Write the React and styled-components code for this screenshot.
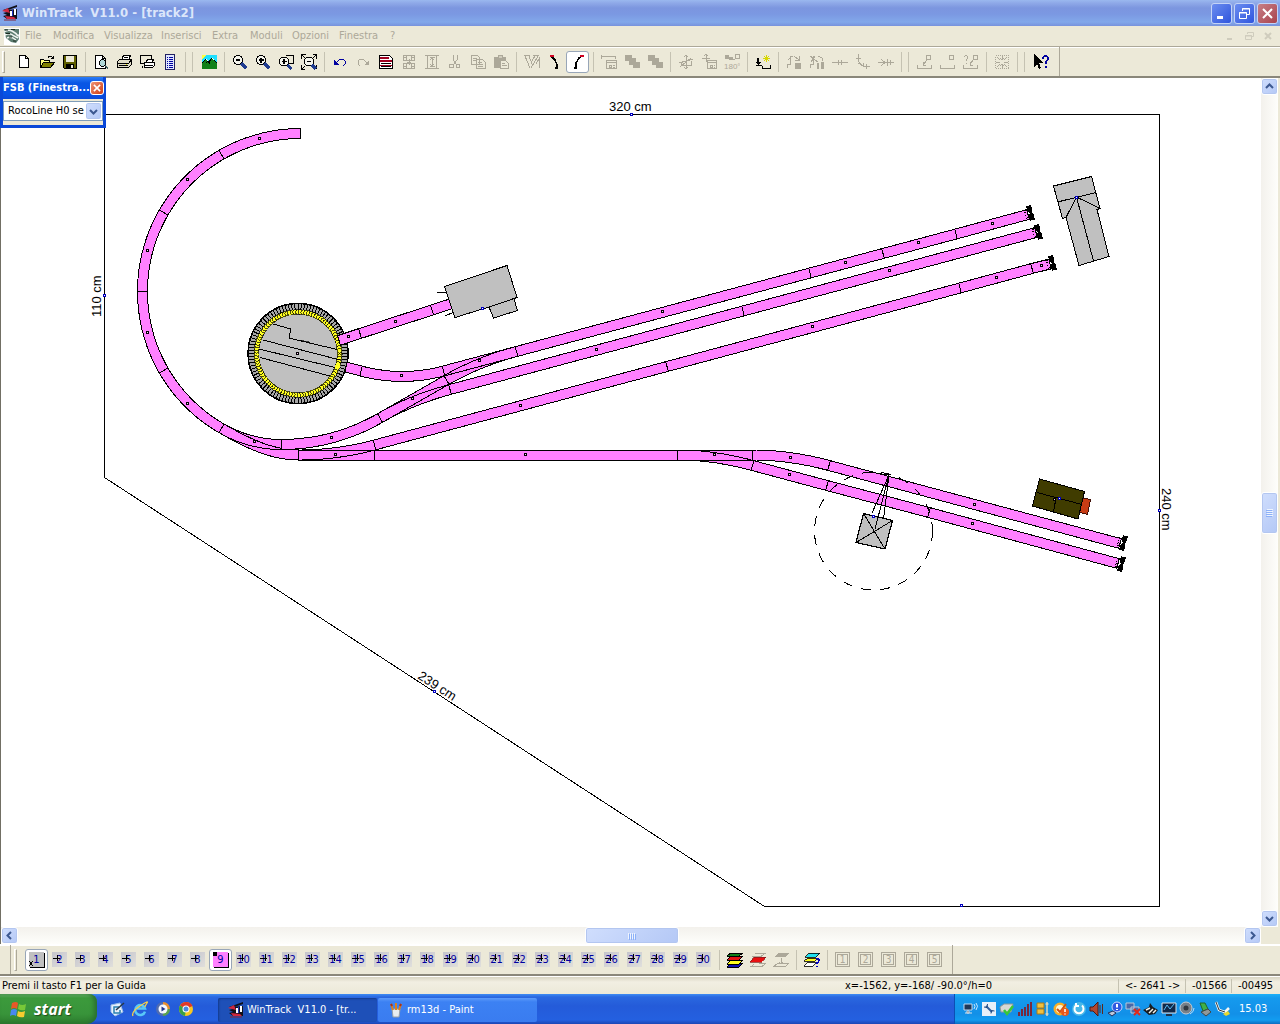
import React from "react";
import styled, { createGlobalStyle, css } from "styled-components";

const UI_FONT = '"DejaVu Sans Condensed", "DejaVu Sans", sans-serif';
const FACE = "#ece9d8";
const GREY = "#aca899";

const GlobalStyle = createGlobalStyle`
  * { box-sizing: border-box; }
  body { margin: 0; background: ${FACE}; font: 11px/14px ${UI_FONT}; color: #000; }
  button { font: inherit; color: inherit; padding: 0; margin: 0; border: 0; background: none; }
  svg { display: block; flex: none; }
`;

/* ---------- window frame ---------- */

const Window = styled.div`
  display: flex;
  flex-direction: column;
  height: 100vh;
  overflow: hidden;
`;

const TitleBar = styled.header`
  display: flex;
  align-items: center;
  gap: 4px;
  height: 26px;
  flex: none;
  padding: 0 2px;
  background: linear-gradient(#9ab8ef 0, #8fa9e8 3px, #7c96df 8px, #7b98e2 14px, #82a8ea 22px, #7892dc 26px);
`;

const Title = styled.h1`
  flex: 1;
  margin: 0;
  font: bold 13px/16px ${UI_FONT};
  color: #dbe6fa;
  white-space: pre;
`;

const CaptionButtons = styled.div`
  display: flex;
  gap: 2px;
`;

const CaptionButton = styled.button`
  display: grid;
  place-items: center;
  width: 21px;
  height: 21px;
  border: 1px solid #c3d3f7;
  border-radius: 3px;
  background: ${(p) => (p.$close ? "linear-gradient(135deg, #c77f86, #a9434d)" : "linear-gradient(135deg, #6b8df0, #2f55dd)")};
`;

const MenuBar = styled.nav`
  display: flex;
  align-items: center;
  height: 20px;
  flex: none;
  padding: 0 4px;
  color: ${GREY};
`;

const MenuList = styled.div`
  display: flex;
  padding-left: 5px;
`;

const MenuItem = styled.button`
  width: ${(p) => p.$width}px;
  text-align: left;
  white-space: nowrap;
`;

const MdiButtons = styled.div`
  display: flex;
  gap: 3px;
  margin-left: auto;
`;

const MdiButton = styled.button`
  display: grid;
  place-items: center;
  width: 16px;
  height: 16px;
`;

const ToolRow = styled.div`
  display: flex;
  height: 32px;
  flex: none;
  border-top: 1px solid ${(p) => (p.$bottom ? "#fff" : GREY)};
  border-bottom: 2px solid #8a877a;
  box-shadow: inset 0 1px #fff;
`;

const ToolGroup = styled.div`
  display: flex;
  align-items: center;
  padding: 0 ${(p) => p.$end}px 0 ${(p) => p.$start}px;
  margin-left: ${(p) => p.$indent || 0}px;
  border-right: 1px solid ${GREY};
  border-left: ${(p) => (p.$indent ? `1px solid ${GREY}` : "0")};
`;

const Grip = styled.span`
  width: 3px;
  height: 22px;
  margin-right: ${(p) => p.$gap}px;
  border: 1px solid;
  border-color: #fff ${GREY} ${GREY} #fff;
`;

const Separator = styled.span`
  width: ${(p) => (p.$double ? 16 : 8)}px;
  height: 20px;
  display: flex;
  justify-content: ${(p) => (p.$double ? "space-between" : "center")};
  padding: 0 ${(p) => (p.$double ? 4 : 0)}px;
  &::before, ${(p) => (p.$double ? "&::after" : "&::before")} {
    content: "";
    width: 1px;
    background: #c5c2b2;
  }
`;

const ToolButton = styled.button`
  display: grid;
  place-items: center;
  width: 23px;
  height: 22px;
  border-radius: 3px;
  ${(p) => p.$pressed && css`
    background: #fff;
    border: 1px solid #98a6b8;
  `}
`;

/* ---------- workspace ---------- */

const Workspace = styled.main`
  position: relative;
  flex: 1;
  min-height: 0;
  display: grid;
  grid-template: minmax(0, 1fr) 17px / minmax(0, 1fr) 17px;
  padding-right: 2px;
  border-left: 1px solid #716f64;
`;

const Plan = styled.div`
  background: #fff;
  overflow: hidden;
`;

const ScrollTrack = styled.div`
  display: flex;
  flex-direction: ${(p) => (p.$vertical ? "column" : "row")};
  background: linear-gradient(${(p) => (p.$vertical ? "to right" : "to bottom")}, #f3f1ec, #fefefb);
`;

const ScrollGap = styled.span`
  flex: ${(p) => p.$grow};
`;

const scrollFace = css`
  display: grid;
  place-items: center;
  border: 1px solid #fff;
  border-radius: 3px;
  background: linear-gradient(135deg, #d0defd, #b4c8f6);
  box-shadow: inset 0 0 0 1px #b3c6f0;
`;

const ScrollArrow = styled.button`
  ${scrollFace}
  width: 17px;
  height: 17px;
`;

const ScrollThumb = styled.button`
  ${scrollFace}
  width: ${(p) => (p.$vertical ? 17 : 94)}px;
  height: ${(p) => (p.$vertical ? 42 : 17)}px;
`;

/* floating track library window, lies over the plan */
const Palette = styled.section`
  position: absolute;
  left: -1px;
  top: -1px;
  width: 106px;
  border: 3px solid #0a48d8;
  border-top: 0;
  background: ${FACE};
`;

const PaletteHead = styled.div`
  display: flex;
  align-items: center;
  justify-content: space-between;
  height: 22px;
  padding-right: 2px;
  background: linear-gradient(#2a7cf8, #0a56e4 6px, #0654e8 16px, #0a48d8);
`;

const PaletteTitle = styled.h2`
  margin: 0;
  font: bold 11px/14px ${UI_FONT};
  color: #fff;
  white-space: nowrap;
`;

const PaletteClose = styled.button`
  display: grid;
  place-items: center;
  flex: none;
  width: 14px;
  height: 14px;
  border: 1px solid #fff;
  border-radius: 3px;
  background: linear-gradient(135deg, #ee9376, #cf3d12);
`;

const PaletteField = styled.div`
  position: relative;
  height: 26px;
  padding: 2px 0 4px;
`;

const LibrarySelect = styled.select`
  display: block;
  appearance: none;
  width: 100%;
  height: 20px;
  padding: 0 18px 0 4px;
  border: 1px solid #7f9db9;
  border-radius: 0;
  background: #fff;
  color: #000;
  font: 11px/14px ${UI_FONT};
  white-space: nowrap;
  overflow: hidden;
  text-overflow: clip;
`;

const SelectArrow = styled.span`
  ${scrollFace}
  position: absolute;
  right: 1px;
  top: 3px;
  width: 17px;
  height: 18px;
  pointer-events: none;
`;

/* ---------- layer bar, status bar ---------- */

const LayerButton = styled(ToolButton)`
  color: #0000a0;
`;

const LayerFace = styled.span`
  position: relative;
  display: grid;
  place-items: center;
  width: 15px;
  height: 15px;
  background: ${(p) => p.$fill};
  box-shadow: ${(p) => (p.$raised ? "1px 1px #000" : "none")};
`;

const LayerMark = styled.svg`
  position: absolute;
  left: 0;
  top: 0;
`;

const LayerNumber = styled.span`
  font: 11px/15px ${UI_FONT};
`;

const StatusBar = styled.footer`
  display: flex;
  align-items: center;
  height: 18px;
  flex: none;
  padding: 1px 2px 0;
  border-top: 1px solid #fff;
  background: linear-gradient(#d8d4c2, #f2efe2 5px, #ece9d8);
  white-space: nowrap;
`;

const StatusMain = styled.span`
  flex: 1;
`;

const StatusCoords = styled.span`
  width: 273px;
`;

const StatusCell = styled.span`
  width: ${(p) => p.$width}px;
  padding-left: 6px;
  border-left: 1px solid #c5c2b2;
`;

/* ---------- taskbar ---------- */

const Taskbar = styled.footer`
  display: flex;
  height: 30px;
  flex: none;
  background: linear-gradient(#3f8cf3 0, #2a68e0 3px, #245bd9 12px, #2460e0 26px, #1c46b4 30px);
  color: #fff;
`;

const StartButton = styled.button`
  display: flex;
  align-items: center;
  gap: 6px;
  width: 97px;
  padding-left: 10px;
  border-radius: 0 8px 10px 0;
  background: linear-gradient(#6cb86c 0, #3c9a3c 4px, #38943a 20px, #2c7a2e 30px);
  box-shadow: inset -3px 0 4px #2a7030;
`;

const StartLabel = styled.span`
  font: italic bold 16px/20px "Open Sans", sans-serif;
  color: #fff;
  text-shadow: 1px 1px 1px #1c4c1c;
`;

const QuickLaunch = styled.div`
  display: flex;
  align-items: center;
  gap: 7px;
  width: 121px;
  padding-left: 12px;
`;

const QuickButton = styled.button`
  display: grid;
  place-items: center;
`;

const TaskButton = styled.button`
  display: flex;
  align-items: center;
  gap: 3px;
  width: 159px;
  height: 24px;
  margin: 4px 1px 0 0;
  padding-left: 10px;
  border-radius: 2px;
  color: #fff;
  white-space: pre;
  background: ${(p) => (p.$active ? "#1e50b8" : "linear-gradient(#5c9bfa, #3c81f3 4px, #3a7cf0)")};
  box-shadow: ${(p) => (p.$active ? "inset 1px 1px 2px #143a8c" : "none")};
`;

const Tray = styled.div`
  display: flex;
  align-items: center;
  gap: 2px;
  margin-left: auto;
  width: 326px;
  padding-left: 8px;
  border-left: 1px solid #0c4fb4;
  background: linear-gradient(#1cb0f8 0, #159aee 4px, #1290e8 20px, #129cf0 26px, #0d6cc0 30px);
`;

const Clock = styled.time`
  margin-left: 6px;
`;

/* ---------- icons, 16x16 ---------- */

const D = { fill: "none", stroke: GREY };
const K = { fill: "none", stroke: "#000" };

const ICONS = {
  new: <path d="M3.500 1.500h6l3 3v9h-9zM9.500 1.500v3h3" fill="#fff" stroke="#000" />,
  open: <g stroke="#000"><path d="M1.500 13.500v-8h3l1 1h5v3" fill="#ffff80" /><path d="M1.500 13.500l3-5h11l-4 5z" fill="#808000" /><path d="M9 3.500q3-3 5 1M14.500 1.500v3h-3" fill="none" /></g>,
  save: <g><path d="M1.500 1.500h13v13h-12l-1-1z" fill="#606000" stroke="#000" /><path d="M4 2h8v6H4z" fill="#ece9d8" /><path d="M4 10h8v4H4z" fill="#000" /><path d="M9 11h2v3H9z" fill="#ece9d8" /></g>,
  preview: <g stroke="#000"><path d="M2.500 1.500h7l3 3v10h-10zM9.500 1.500v3h3" fill="#fff" /><circle cx="9.500" cy="9" r="3.200" fill="#b0d8d8" /><path d="M12 11.500l3 3" strokeWidth="2" stroke="#406060" /></g>,
  print: <g stroke="#000"><path d="M5.500 6l2-4.500h7L12.500 6" fill="#fff" /><path d="M1.500 7.500l2-2h12v5l-3 3h-11z" fill="#e0dcc8" /><path d="M2 9.500h10.500l2.500-3M3 11.500h9M8 3.500h4" fill="none" /><path d="M10 10.500h1" stroke="#e0e000" /></g>,
  printview: <g stroke="#000"><path d="M1.500 1.500h11v8h-11z" fill="#ece9d8" /><path d="M7.500 8l1-3h6l-1 3" fill="#fff" /><path d="M5.500 8.500h10v3l-2 2h-8zM6 11.500h8" fill="#fff" /><path d="M3 11.500v2h1" fill="none" /></g>,
  list: <g><path d="M3.500.5h9v15h-9z" fill="#dfe6ff" stroke="#202060" /><path d="M5 3.500h1M7 3.500h4M5 5.500h1M7 5.500h4M5 7.500h1M7 7.500h4M5 9.500h1M7 9.500h4M5 11.500h1M7 11.500h4M5 13.500h1M7 13.500h4" stroke="#0000a0" fill="none" /></g>,
  photo: <g><path d="M1 1h15v8H1z" fill="#20e0ff" /><path d="M1 1h4L3 4 1 5z" fill="#ffff40" /><path d="M1 9l4-4 3 3 3-4 5 5v6H1z" fill="#108018" /><path d="M1 9l4-4 3 3 3-4 5 5M5 9l2-2 2 3" {...K} /><path d="M4 6l1-1 2 2zM10 5l1-1 2 2z" fill="#fff" /></g>,
  zoomOut: <g><circle cx="6" cy="6" r="4.500" fill="#f4f4ec" stroke="#000" /><path d="M4 6h4" stroke="#000" strokeWidth="2" /><path d="M9.500 9.500l5 5" stroke="#203c90" strokeWidth="3" /></g>,
  zoomIn: <g><circle cx="6" cy="6" r="4.500" fill="#f4f4ec" stroke="#000" /><path d="M3.500 6h5M6 3.500v5" stroke="#000" strokeWidth="1.500" /><path d="M9.500 9.500l5 5" stroke="#203c90" strokeWidth="3" /></g>,
  zoomBox: <g><path d="M7.500 1.500h8v8h-8" {...K} /><circle cx="6" cy="7.500" r="4.500" fill="#f4f4ec" stroke="#000" /><path d="M3.500 7.500h5M6 5v5" stroke="#000" strokeWidth="1.500" /><path d="M9.500 11l4 4" stroke="#203c90" strokeWidth="3" /></g>,
  zoomAll: <g><path d="M.5 4.500v-4h4M11.500.5h4v4M15.500 11v4M4 15.500H.5V11M1 1l3 3M15 1l-3 3M1 15l3-3" {...K} /><circle cx="8" cy="7.500" r="4.500" fill="#f4f4ec" stroke="#000" /><path d="M6 7.500h4" stroke="#000" strokeWidth="1.500" /><path d="M11 11l4 4" stroke="#203c90" strokeWidth="3" /></g>,
  undo: <g><path d="M2 6v5h5z" fill="#0000a0" /><path d="M4 9l4-4h3l2 2v3l-2 2" fill="none" stroke="#0000a0" /></g>,
  redo: <g><path d="M14 6v5H9z" fill={GREY} /><path d="M12 9L8 5H5L3 7v3l2 2" {...D} /></g>,
  report: <g><path d="M1.500 1.500h10l3 3v10h-13z" fill="#fff" stroke="#000" /><path d="M2 4h9M2 7h12" stroke="#a00020" strokeWidth="2" /><path d="M3 9.500h10M3 12.500h10" stroke="#000" /><path d="M2 11h12" stroke="#a00020" /></g>,
  film: <path d="M2.500 1.500h11v5h-11zM2.500 9.500h11v5h-11zM5.500 1v6M10.500 1v6M5.500 9v6M10.500 9v6M3 3.500h2M11 3.500h2M3 12.500h2M11 12.500h2M8.500 5v6M6 8.500h4" {...D} />,
  column: <path d="M1 1.500h14M1 14.500h14M3.500 2v12M12.500 2v12M5.500 3.500h5M5.500 12.500h5M8.500 4v8M6 6l2-2 2 2M6 10l2 2 2-2" {...D} />,
  cut: <g {...D}><path d="M6 1v5l4 5M10 1v5l-4 5" /><circle cx="4.500" cy="12" r="2" /><circle cx="11" cy="12" r="2" /></g>,
  copy: <path d="M1.500 1.500h6l2 2v7h-8zM6.500 5.500h6l2.500 2.500v6.500H6.500zM3 4.500h4M3 6.500h3M8 8.500h4M8 10.500h5M8 12.500h5" {...D} />,
  paste: <g><path d="M1 3h12v11H1z" fill={GREY} /><path d="M5 1h4v3H5z" fill="#d0ccbc" stroke={GREY} /><path d="M7.500 6.500h5l3 3v5h-8z" fill={FACE} stroke={GREY} /><path d="M9 9.500h3M9 11.500h5" {...D} /></g>,
  fork: <path d="M1 2l5 12M5 2l3 8M14 2L7 14M11 2L8 7M0 1.500h6M9 1.500h6M12 10l3-5v9" {...D} />,
  curveRight: <g><path d="M5 3l3 3 2 5v3H8" fill="none" stroke="#000" strokeWidth="1.500" /><path d="M3 1h4v2H3z" fill="#d00020" /></g>,
  curveLeft: <g><path d="M4 14h2V9l3-5 2-1" fill="none" stroke="#000" strokeWidth="1.500" /><path d="M10 1h4v2h-4z" fill="#d00020" /></g>,
  props: <path d="M.5 1v4M.5 2.500h14v2M5.500 6.500h10v8h-10zM5.500 8.500h10M8 11h2v2H8zM12 11.500h2M12 13.500h2" {...D} />,
  stack: <path d="M1 1h7v3h4v4h4v6H9v-3H5V7H1z" fill={GREY} />,
  rotate: <path d="M1 9l14-4M8.500 1v14M2 13L13 4M3 8v3h10v-4M6 3l2-2 2 2M6 13l2 2 2-2" {...D} />,
  moveProps: <path d="M5.500 0v8M1 4.500h8M3 2l2-2 2 2M6.500 6.500h9v8h-9zM6.500 8.500h9M9 11h2v2H9zM13 11.500h1M13 13.500h1" {...D} />,
  turn: <g><path d="M1 1h4v4H1zM5 3h4v3H5z" fill={GREY} /><path d="M11.500.5h4v4h-4zM11 5.500H9" {...D} /><text x="0" y="15" fontSize="8" fontFamily="Liberation Sans" fill={GREY}>180°</text></g>,
  addTrack: <g><path d="M11 1v7M8 4.500h7M9 2l5 5M14 2L9 7" stroke="#d8d800" fill="none" /><path d="M1 11.500h6M7.500 12v2h8v-3" {...K} /><path d="M2 4h2v4h2l-3 3-3-3h2z" fill="#000" /></g>,
  levelA: <g><path d="M1 14v-4h3V2h3M2 6l4-4M8 2l5 4M13 2v4h-4" {...D} /><path d="M9 9h6v6H9z" fill={GREY} /></g>,
  levelB: <g><path d="M1 14v-4h3V2M1 2l8 6M6 2L2 8M9 2l4 2v3" {...D} /><path d="M12 8h3v7h-3zM8 9h2v6H8z" fill={GREY} /></g>,
  straight: <path d="M0 8.500h16M6.500 6v5M9.500 6v5" {...D} />,
  bend: <path d="M3 0v5q1 8 12 8M1 4.500h5M8 9v4M11.500 10v5M5 8l-2 2" {...D} />,
  joinRight: <path d="M0 8.500h16M3 5l4 3.500-4 3.500M9.500 5v7M12.500 6v5" {...D} />,
  rampDown: <path d="M.5 11v3.500h14V11M9.500 1.500h4v4h-4zM10 6l-4 5M6 8v3h3" {...D} />,
  rampFlat: <path d="M.5 11v3.500h14V11M9.500 1.500h4v4h-4z" {...D} />,
  rampAsk: <path d="M.5 11v3.500h14V11M10.500 1.500h4v4h-4zM10 6l-3 5M1 3q2-3 4 0 0 1-2 3v1M3 9v1M7 8v3h3" {...D} />,
  compress: <g><path d="M1.500 1.500h13v13h-13z" fill="none" stroke={GREY} strokeDasharray="1 1" /><path d="M8.500 2v4M8.500 14v-4M2 8.500h4M14 8.500h-4M3 3l3 3M13 3l-3 3M3 13l3-3M13 13l-3-3M6 4l2 2 2-2M6 12l2-2 2 2" {...D} /></g>,
  help: <g><path d="M1 0v13l3-3 2 5 2-1-2-5h4z" fill="#000" /><path d="M10 5q0-3 2.500-3T15 4.500q0 1.500-2.500 3.500v2" fill="none" stroke="#0000a0" strokeWidth="2" /><path d="M11.500 12h2v2h-2z" fill="#0000a0" /></g>,
  layers: <g><path d="M4 11h12l-4 4H0z" fill="#1010b0" stroke="#000" /><path d="M4 8h12l-4 4H0z" fill="#ffff20" stroke="#000" /><path d="M4 4h12l-4 4H0z" fill="#e01010" stroke="#000" /><path d="M4 1h12l-4 3H0z" fill="#108018" stroke="#000" /></g>,
  layerOne: <g><path d="M5 1.500h10l-4 3H2M4 12.500l-3 2h11l4-3H9" {...D} /><path d="M4 5h12l-4 5H0z" fill="#e81010" stroke="#802020" strokeWidth=".7" /></g>,
  layerMove: <g><path d="M5 1h11l-4 4H1z" fill={GREY} /><path d="M4.500 11.500h11l-3 3h-12zM8.500 6v6M6 10l2 2 2-2" {...D} /></g>,
  layerAsk: <g stroke="#000" strokeWidth=".8"><path d="M5 1h11l-4 4H1z" fill="#20e0f0" /><path d="M4 6h11l-4 3H0z" fill="#ffff20" /><path d="M4 10h9l-4 4H0z" fill="#fff" /><path d="M12 7q3-1 3 1t-2 3v1M13 14v1" fill="none" stroke="#0000c0" strokeWidth="1.500" /></g>,
};

const Icon = ({ name }) => (
  <svg width="16" height="16" viewBox="0 0 16 16" shapeRendering="crispEdges" aria-hidden="true">{ICONS[name]}</svg>
);

const AppLogo = () => (
  <svg width="16" height="16" viewBox="0 0 16 16" aria-hidden="true">
    <path d="M1 5L15 0v2L6 5l9-1v10H5l-4-3 4-1-4-2 4-1z" fill="#101018" />
    <path d="M0 6l6-3 2 5-4-1zM3 11l9 1 2 2H5z" fill="#d02840" />
    <path d="M8 6h2v5H8zM12 4h2v6h-2z" fill="#fff" /><path d="M10 5h1v6h-1z" fill="#2030c0" />
    <path d="M2 15h12" stroke="#802838" />
  </svg>
);

const DocLogo = () => (
  <svg width="16" height="17" viewBox="0 0 16 17" aria-hidden="true">
    <path d="M0 0h16v17H0z" fill="#fff" />
    <path d="M0 1h15v5l-1 1 1 4-3 4-5-1-5-4z" fill="#5c7c70" />
    <path d="M0 4q4-3 8-1t6 5M1 7q5-3 9 1l4 2M3 10q4-2 9 2" fill="none" stroke="#f0f4f0" strokeWidth="1.500" />
    <path d="M1 2h3M7 1.500h4M2 5.500h4M5 9h3M9 13h3" stroke="#182820" />
  </svg>
);

/* ---------- track plan geometry ---------- */

const PINK = "#ff80ff";
const HALF = 5;
const rad = (d) => (d * Math.PI) / 180;

/* outline of one track piece: start x, y, heading; end x, y, heading */
function outline([x0, y0, a0, x1, y1, a1]) {
  const chord = Math.hypot(x1 - x0, y1 - y0);
  const k = chord / (3 * Math.cos(rad((a1 - a0) / 4)) ** 2);
  const bx = x0 + k * Math.cos(rad(a0)), by = y0 + k * Math.sin(rad(a0));
  const cx = x1 - k * Math.cos(rad(a1)), cy = y1 - k * Math.sin(rad(a1));
  const n = a0 === a1 && Math.abs(Math.atan2(y1 - y0, x1 - x0) - rad(a0)) < 0.02 ? 1 : 20;
  const left = [], right = [];
  for (let i = 0; i <= n; i++) {
    const t = i / n, u = 1 - t;
    const x = u ** 3 * x0 + 3 * u * u * t * bx + 3 * u * t * t * cx + t ** 3 * x1;
    const y = u ** 3 * y0 + 3 * u * u * t * by + 3 * u * t * t * cy + t ** 3 * y1;
    const h = rad(a0 + (a1 - a0) * t);
    left.push(`${(x + HALF * Math.sin(h)).toFixed(1)} ${(y - HALF * Math.cos(h)).toFixed(1)}`);
    right.unshift(`${(x - HALF * Math.sin(h)).toFixed(1)} ${(y + HALF * Math.cos(h)).toFixed(1)}`);
  }
  return `M${left.concat(right).join("L")}Z`;
}

const Piece = ({ parts }) => (
  <g>
    {parts.map((p, i) => <path key={i} d={outline(p)} fill={PINK} />)}
    {parts.map((p, i) => <path key={i} d={outline(p)} fill="none" stroke="#000" />)}
  </g>
);

const loop = [0, 1, 2, 3, 4].map((i) => {
  const at = (j) => [300.5 - 158 * Math.sin(rad(30 * j)), 291.5 - 158 * Math.cos(rad(30 * j))];
  return [...at(i), 180 - 30 * i, ...at(i + 1), 150 - 30 * i];
});

/* each entry is one track item; a turnout has two legs */
const PIECES = [
  ...loop.map((p) => [p]),
  [[360, 333.5, -18, 432, 310, -18]],
  [[432, 310, -18, 452, 303.5, -18]],
  [[346, 367, 15, 361, 371, 15]],
  [[361, 371, 15, 443.5, 371, -15]],
  [[221.5, 428.3, 30, 281, 444.5, 0], [221.5, 428.3, 30, 298.5, 455, 0]],
  [[281, 444.5, 0, 380, 418, -30]],
  [[380, 418, -30, 446.5, 380, -30], [380, 418, -30, 450, 389.5, -15]],
  [[443.5, 371, -15, 516.5, 351.5, -15], [446.5, 380, -30, 516.5, 351.5, -15]],
  [[298.5, 455, 0, 374.5, 455, 0], [298.5, 455, 0, 374.5, 445, -15]],
  [[374.5, 455, 0, 677.5, 455, 0]],
  [[677.5, 455, 0, 752.5, 455, 0], [677.5, 455, 0, 752.5, 465.5, 15]],
  [[752.5, 455, 0, 829, 465.5, 15]],
  [[829, 465.5, 15, 1120, 543.5, 15]],
  [[752.5, 465.5, 15, 827, 485.5, 15]],
  [[827, 485.5, 15, 929, 512.5, 15]],
  [[929, 512.5, 15, 1118, 563.5, 15]],
  [[374.5, 445, -15, 667, 366.5, -15]],
  [[667, 366.5, -15, 960, 288, -15]],
  [[960, 288, -15, 1032, 268.5, -15]],
  [[1032, 268.5, -15, 1050, 264, -15]],
  [[450, 389.5, -15, 743, 311, -15]],
  [[743, 311, -15, 1036, 232.5, -15]],
  [[516.5, 351.5, -15, 810, 273, -15]],
  [[810, 273, -15, 883, 253.5, -15]],
  [[883, 253.5, -15, 956, 234, -15]],
  [[956, 234, -15, 1028, 214.5, -15]],
];

const NODES = [
  [259, 138], [187, 179], [147, 250], [147, 332], [187, 403], [254, 441], [331, 437], [335, 454],
  [348, 336], [395, 321], [401, 375], [412, 398], [479, 360], [525, 454], [520, 405], [596, 349],
  [662, 311], [714, 454], [812, 326], [845, 262], [918, 242], [992, 223], [889, 270], [996, 277],
  [1041, 265], [790, 457], [789, 474], [974, 504], [972, 523], [297, 353], [1054, 499],
];

const BLUE_NODES = [
  [631, 114], [1159, 510], [961, 905], [434, 691], [104, 295], [482, 308], [1076, 197], [873, 516], [1059, 498],
];

const BUFFERS = [[1030, 213, -15], [1038, 232, -15], [1052, 263, -15], [1123, 543, 15], [1121, 564, 15]];

const ringTeeth = Array.from({ length: 96 }, (_, i) => rad(i * 3.75));

const TrackPlan = () => (
  <svg width="1261" height="849" viewBox="1 78 1261 849" role="img" aria-label="track2" fontFamily="Liberation Sans, sans-serif" fontSize="13">
    <g shapeRendering="crispEdges">
      <path d="M104.500 114.500H1159.500V906.500H764.500L104.500 477.500Z" fill="none" stroke="#000" />

      {/* turntable */}
      <circle cx="298" cy="353.500" r="50" fill="#a8a8a8" stroke="#000" strokeWidth="1.500" />
      {ringTeeth.map((a, i) => (
        <path key={i} stroke="#000" d={`M${298 + 44 * Math.cos(a)} ${353.5 + 44 * Math.sin(a)}L${298 + 50 * Math.cos(a)} ${353.5 + 50 * Math.sin(a)}`} />
      ))}
      {ringTeeth.map((a, i) => (
        <circle key={i} cx={298 + 41.5 * Math.cos(a)} cy={353.5 + 41.5 * Math.sin(a)} r="2.500" fill="#ffff20" stroke="#000" strokeWidth=".7" />
      ))}
      <circle cx="298" cy="353.500" r="39" fill="#c0c0c0" />
      <path d="M263 340L340 360M259 349L337 368M260 357.500L330 376M273 324L291 329L289 338L337 349.500" fill="none" stroke="#000" />
      <path d="M300 341l3-1 2 2 3-1 2 3" fill="none" stroke="#000" strokeWidth=".7" />

      {PIECES.map((parts, i) => <Piece key={i} parts={parts} />)}
      <Piece parts={[[339, 340.5, -18, 360, 333.5, -18]]} />
      <circle cx="337.500" cy="366.500" r="2.500" fill="#ffff20" />

      {/* engine shed */}
      <path d="M437 292.500h9M445 316l9-4" stroke="#000" />
      <path d="M444.500 286.500L507 265.500L517 297.500L514 299L517.500 310.500L493.500 318L489 307L455 317.500Z" fill="#c0c0c0" stroke="#000" />
      <path d="M489 307L517 297.500" stroke="#000" />

      {/* station building */}
      <path d="M1053.500 186L1091.500 176.500L1100 208.500L1097 209.500L1109 256.500L1079 265.500L1066 217.500L1062.500 218.500Z" fill="#c0c0c0" stroke="#000" />
      <path d="M1057.500 202L1096 192.500M1093.500 261L1076.500 197L1066 217.500M1076.500 197L1100 208.500" fill="none" stroke="#000" />

      {/* crane */}
      <circle cx="873.500" cy="531" r="59" fill="none" stroke="#000" strokeDasharray="10 9" />
      <path d="M863.500 513.500L892.500 520.500L885 549L856 542.500Z" fill="#c0c0c0" stroke="#000" strokeWidth="1.200" />
      <path d="M863.500 513.500L885 549M892.500 520.500L856 542.500M889 475L872 513M889 475L875 529M889 475L883.500 519M879 473.500L889 475" fill="none" stroke="#000" />

      {/* goods shed */}
      <path d="M1081 497.500L1090.500 499.500L1087.500 514.500L1079 512Z" fill="#c83c14" stroke="#401008" />
      <path d="M1039.500 479L1084.500 491.500L1078 519L1032.500 506Z" fill="#403c00" stroke="#000" />
      <path d="M1037 492.500L1082 504.500M1056 498L1053.500 512" fill="none" stroke="#000" />

      {BUFFERS.map(([x, y, a]) => (
        <g key={`${x},${y}`} transform={`translate(${x} ${y}) rotate(${a})`}>
          <path d="M-2-7.500h5v6l-1 1.500 1 1.500v6h-5v-6l2-1.500-2-1.500z" fill="#000" />
          <path d="M-5-4h4M-5 4h4M-6-2l2 1M-6 2l2-1" stroke="#000" />
        </g>
      ))}

      {NODES.map(([x, y]) => <rect key={`${x},${y}`} x={x - 0.5} y={y - 0.5} width="2" height="2" fill="#ffc8ff" stroke="#000" />)}
      {BLUE_NODES.map(([x, y]) => <rect key={`${x},${y}`} x={x - 0.5} y={y - 0.5} width="2" height="2" fill="#fff" stroke="#0000c0" />)}
    </g>
    <text x="609" y="111">320 cm</text>
    <text transform="translate(101 317) rotate(-90)">110 cm</text>
    <text transform="translate(1162 488) rotate(90)">240 cm</text>
    <text transform="translate(417 678) rotate(33)">239 cm</text>
  </svg>
);

/* ---------- tool lists ---------- */

const MENU = [["File", 28], ["Modifica", 51], ["Visualizza", 57], ["Inserisci", 51], ["Extra", 38], ["Moduli", 42], ["Opzioni", 47], ["Finestra", 51], ["?", 12]];

const TOOLS = [
  "new", "open", "save", "|", "preview", "print", "printview", "list", "||", "photo", "|",
  "zoomOut", "zoomIn", "zoomBox", "zoomAll", "|", "undo", "redo", "report", "film", "column", "cut", "copy", "paste", "|",
  "fork", "curveRight", "curveLeft", "|", "props", "stack", "stack", "|", "rotate", "moveProps", "turn", "|",
  "addTrack", "|", "levelA", "levelB", "straight", "bend", "joinRight", "||", "rampDown", "rampFlat", "rampAsk", "|",
  "compress", "||", "help",
];

const ToolItem = ({ name }) => {
  if (name === "|") return <Separator />;
  if (name === "||") return <Separator $double />;
  return (
    <ToolButton type="button" aria-label={name} $pressed={name === "curveLeft"}>
      <Icon name={name} />
    </ToolButton>
  );
};

const Layer = ({ n }) => {
  const active = n === 1 || n === 9;
  return (
    <LayerButton type="button" $pressed={active}>
      <LayerFace $raised={active} $fill={n === 9 ? PINK : n === 1 ? "#c0c0c0" : "linear-gradient(135deg, #c4c4cc, #e0dfdc)"}>
        <LayerNumber>{n}</LayerNumber>
        <LayerMark width="15" height="15" viewBox="0 0 15 15" shapeRendering="crispEdges">
          {n === 1 && <path d="M0 9l4 5M4 9l-4 5" stroke="#000" />}
          {n === 9 && <path d="M0 0h4v4H0z" />}
          {!active && <path d={n < 10 ? "M1 6.500h7M5.500 3v6" : "M1 6.500h7M6.500 2v7"} stroke="#000" />}
        </LayerMark>
      </LayerFace>
    </LayerButton>
  );
};

const ViewBox = styled.span`
  display: grid;
  place-items: center;
  width: 15px;
  height: 15px;
  border: 3px double ${GREY};
  color: ${GREY};
  font: 10px/10px ${UI_FONT};
`;

const Chevron = ({ turn }) => (
  <svg width="9" height="9" viewBox="0 0 9 9" aria-hidden="true">
    <path d="M1 6l3.500-3.500L8 6" fill="none" stroke="#3c5890" strokeWidth="2" transform={`rotate(${turn} 4.500 4.500)`} />
  </svg>
);

const ThumbLines = ({ turn }) => (
  <svg width="8" height="8" viewBox="0 0 8 8" shapeRendering="crispEdges" aria-hidden="true">
    <path d="M.5 1v6M2.500 1v6M4.500 1v6M6.500 1v6" stroke="#eef4fe" transform={`rotate(${turn} 4 4)`} />
    <path d="M1.500 2v6M3.500 2v6M5.500 2v6M7.500 2v6" stroke="#8cb0f8" transform={`rotate(${turn} 4 4)`} />
  </svg>
);

const QUICK = [
  ["Desktop", <g key="a"><path d="M2 4l9-2 3 9-8 4-4-4z" fill="#e8f0fc" stroke="#9cc0e8" /><path d="M10 6H5v6h6V9" fill="none" stroke="#2880b0" strokeWidth="1.500" /><path d="M7 9l8-7" stroke="#283848" strokeWidth="1.500" /></g>],
  ["Internet Explorer", <g key="b"><path d="M13 10.500a5 5 0 1 1 0-3H5" fill="none" stroke="#58c8f8" strokeWidth="2.500" /><path d="M1 15Q-1 11 8 5t7-3-2 4" fill="none" stroke="#f8d048" strokeWidth="1.300" /></g>],
  ["Media Player", <g key="c"><circle cx="8" cy="8" r="7" fill="#506cb0" /><path d="M8 1a7 7 0 0 1 7 7H8z" fill="#e89030" /><path d="M8 15a7 7 0 0 0 7-7H8z" fill="#58a050" /><circle cx="8" cy="8" r="4.500" fill="#f4f8ff" /><path d="M6.500 5.500v5l4-2.500z" fill="#203890" /></g>],
  ["Chrome", <g key="d"><circle cx="8" cy="8" r="7" fill="#f8c820" /><path d="M8 8L2 4.500A7 7 0 0 1 14.500 5z" fill="#e03828" /><path d="M8 8l-1 7A7 7 0 0 1 2 4.500z" fill="#38a048" /><circle cx="8" cy="8" r="3.500" fill="#fff" /><circle cx="8" cy="8" r="2.500" fill="#4888e0" /></g>],
];

const TRAY = [
  <g><path d="M1 3h8v6H1z" fill="#203858" stroke="#c0d8f0" /><path d="M2 12h7M4 10h2v2H4z" stroke="#d8e0e8" /><path d="M11 3q2 2 0 5M13 2q3 3 0 7" fill="none" stroke="#c8e8ff" /></g>,
  <g><path d="M1 1h14v14H1z" fill="#e8f0f8" /><path d="M5 5l6 6" stroke="#3060a0" strokeWidth="2" /><path d="M3 6l3 .5L6.500 3M10 12.500l.5-3 3 .5" fill="none" stroke="#204880" /></g>,
  <g><path d="M1 6l4-3h9l-2 8H2z" fill="#d8d8d4" stroke="#909898" /><path d="M5 9l3 4 6-8" fill="none" stroke="#38c838" strokeWidth="2.500" /></g>,
  <path d="M2 11v4M5 8v7M8 6v9M11 3v12M14 1v14" stroke="#78283c" strokeWidth="2" />,
  <g><path d="M2 2h7v5H2zM2 8h7v5H2z" fill="#f0c040" stroke="#a87818" /><path d="M12 1v14M10.500 3h3M10.500 13h3" stroke="#d8d8c0" strokeWidth="1.500" /></g>,
  <g><circle cx="7" cy="8" r="6.500" fill="#f8b028" /><circle cx="7" cy="8" r="4" fill="#fff4d0" /><path d="M4 8l3 3 6-8" fill="none" stroke="#d05010" strokeWidth="2" /><circle cx="12" cy="11" r="4" fill="#e85818" /><path d="M12 8v3M12 12.500v1" stroke="#fff" strokeWidth="1.500" /></g>,
  <g><circle cx="8" cy="8" r="7" fill="#48b8e8" /><path d="M11 4.500A4.500 4.500 0 1 1 5 4.500M5 2v3h3" fill="none" stroke="#fff" strokeWidth="2" /></g>,
  <g><path d="M1 6h3l5-5v14l-5-5H1z" fill="#b04830" stroke="#501810" /><path d="M11 4v8M13.500 3v10" stroke="#602818" /></g>,
  <g><circle cx="10" cy="6" r="5" fill="#3058e0" stroke="#c8d8ff" /><path d="M10 3v3.500M10 8v1" stroke="#fff" strokeWidth="2" /><path d="M1 12l5-2 3 2-4 3z" fill="#c0c8d8" stroke="#203060" /></g>,
  <g><path d="M1 2h8v6H1zM6 6h8v6H6z" fill="#4868a8" stroke="#b8c8d8" /><path d="M9 8l6 6M15 8l-6 6" stroke="#e02818" strokeWidth="2" /></g>,
  <g><path d="M0 9l6-3 1-4 3 4 5 3-3 4-6 1z" fill="#181c20" /><path d="M3 9l4-2M6 12l4-4M10 12l3-3" stroke="#f0f0e8" strokeWidth="1.500" /></g>,
  <g><path d="M1 2h14v10H1z" fill="#102848" stroke="#d8e0e8" /><path d="M3 9l3-5 3 4 4-5" fill="none" stroke="#58b8f0" /><path d="M5 14h6" stroke="#203048" strokeWidth="2" /></g>,
  <g><circle cx="7" cy="7" r="6" fill="#788088" stroke="#c8ccd0" /><circle cx="7" cy="7" r="2.500" fill="#303840" /><path d="M11 13q4-2 4-6" fill="none" stroke="#b8dcf8" /></g>,
  <g><path d="M3 2h5l3 6-5 2z" fill="#40b048" stroke="#206828" /><path d="M4 11l7-3 3 3-5 4z" fill="#909898" stroke="#404848" /></g>,
  <g><path d="M1 1l3 8 6 2 4-4" fill="none" stroke="#f8f8f4" strokeWidth="2.500" /><path d="M1 1l3 8 6 2" fill="none" stroke="#303840" /><path d="M8 13l5-3 2 3-4 2z" fill="#e8d830" /></g>,
];

export default function App() {
  return (
    <Window>
      <GlobalStyle />
      <TitleBar>
        <AppLogo />
        <Title>{"WinTrack  V11.0 - [track2]"}</Title>
        <CaptionButtons>
          <CaptionButton type="button" aria-label="Minimize">
            <svg width="13" height="13" viewBox="0 0 13 13"><path d="M2 10.500h6" stroke="#fff" strokeWidth="3" /></svg>
          </CaptionButton>
          <CaptionButton type="button" aria-label="Restore">
            <svg width="13" height="13" viewBox="0 0 13 13" fill="none" stroke="#fff"><path d="M4.500 4V1.500h7v6H9M4 2h8" /><path d="M1.500 5.500h7v6h-7zM1 6h8" /></svg>
          </CaptionButton>
          <CaptionButton type="button" aria-label="Close" $close>
            <svg width="13" height="13" viewBox="0 0 13 13"><path d="M2 2l9 9M11 2l-9 9" stroke="#fff" strokeWidth="2" /></svg>
          </CaptionButton>
        </CaptionButtons>
      </TitleBar>

      <MenuBar>
        <DocLogo />
        <MenuList>
          {MENU.map(([label, width]) => <MenuItem key={label} type="button" $width={width}>{label}</MenuItem>)}
        </MenuList>
        <MdiButtons>
          <MdiButton type="button" aria-label="Minimize document"><svg width="10" height="10" viewBox="0 0 10 10"><path d="M2 8h5" stroke="#cfccbd" strokeWidth="2" /></svg></MdiButton>
          <MdiButton type="button" aria-label="Restore document"><svg width="10" height="10" viewBox="0 0 10 10" fill="none" stroke="#cfccbd"><path d="M3.500 3V1.500h6v4H8M1.500 4.500h6v4h-6zM1 5h7" /></svg></MdiButton>
          <MdiButton type="button" aria-label="Close document"><svg width="10" height="10" viewBox="0 0 10 10"><path d="M2 2l6 6M8 2L2 8" stroke="#cfccbd" strokeWidth="2" /></svg></MdiButton>
        </MdiButtons>
      </MenuBar>

      <ToolRow>
        <ToolGroup $start={2} $end={7}>
          <Grip $gap={7} />
          {TOOLS.map((name, i) => <ToolItem key={i} name={name} />)}
        </ToolGroup>
      </ToolRow>

      <Workspace>
        <Plan><TrackPlan /></Plan>
        <ScrollTrack $vertical>
          <ScrollArrow type="button" aria-label="Scroll up"><Chevron turn={0} /></ScrollArrow>
          <ScrollGap $grow={398} />
          <ScrollThumb type="button" aria-label="Vertical position" $vertical><ThumbLines turn={90} /></ScrollThumb>
          <ScrollGap $grow={376} />
          <ScrollArrow type="button" aria-label="Scroll down"><Chevron turn={180} /></ScrollArrow>
        </ScrollTrack>
        <ScrollTrack>
          <ScrollArrow type="button" aria-label="Scroll left"><Chevron turn={270} /></ScrollArrow>
          <ScrollGap $grow={567} />
          <ScrollThumb type="button" aria-label="Horizontal position"><ThumbLines turn={0} /></ScrollThumb>
          <ScrollGap $grow={565} />
          <ScrollArrow type="button" aria-label="Scroll right"><Chevron turn={90} /></ScrollArrow>
        </ScrollTrack>
        <Palette>
          <PaletteHead>
            <PaletteTitle>FSB (Finestra...</PaletteTitle>
            <PaletteClose type="button" aria-label="Close palette">
              <svg width="8" height="8" viewBox="0 0 9 9"><path d="M1 1l7 7M8 1L1 8" stroke="#fff" strokeWidth="1.800" /></svg>
            </PaletteClose>
          </PaletteHead>
          <PaletteField>
            <LibrarySelect aria-label="Track library"><option>RocoLine H0 senza</option></LibrarySelect>
            <SelectArrow><Chevron turn={180} /></SelectArrow>
          </PaletteField>
        </Palette>
      </Workspace>

      <ToolRow $bottom>
        <ToolGroup $indent={10} $start={3} $end={6}>
          <Grip $gap={8} />
          {Array.from({ length: 30 }, (_, i) => <Layer key={i} n={i + 1} />)}
          {["|", "layers", "layerOne", "layerMove", "|", "layerAsk", "|"].map((name, i) => <ToolItem key={i} name={name} />)}
          {[1, 2, 3, 4, 5].map((n) => <ToolButton key={n} type="button"><ViewBox>{n}</ViewBox></ToolButton>)}
        </ToolGroup>
      </ToolRow>

      <StatusBar>
        <StatusMain>Premi il tasto F1 per la Guida</StatusMain>
        <StatusCoords>x=-1562, y=-168/ -90.0°/h=0</StatusCoords>
        <StatusCell $width={67}>{"<- 2641 ->"}</StatusCell>
        <StatusCell $width={46}>-01566</StatusCell>
        <StatusCell $width={47}>-00495</StatusCell>
      </StatusBar>

      <Taskbar>
        <StartButton type="button">
          <svg width="18" height="18" viewBox="0 0 18 18" aria-hidden="true">
            <path d="M2 3q4-2 6 0L7 9Q4 7 1 9z" fill="#e85828" /><path d="M9 4q3 2 7 0l-1 6q-4 1-7-1z" fill="#78c838" />
            <path d="M1 10q3-2 6 0l-1 6q-3-2-6 0z" fill="#4888f0" /><path d="M8 11q3 2 7 0l-1 6q-4 1-7-1z" fill="#f8cc30" />
          </svg>
          <StartLabel>start</StartLabel>
        </StartButton>
        <QuickLaunch>
          {QUICK.map(([label, art]) => (
            <QuickButton key={label} type="button" aria-label={label}>
              <svg width="16" height="16" viewBox="0 0 16 16">{art}</svg>
            </QuickButton>
          ))}
        </QuickLaunch>
        <TaskButton type="button" $active><AppLogo />{"WinTrack  V11.0 - [tr..."}</TaskButton>
        <TaskButton type="button">
          <svg width="16" height="16" viewBox="0 0 16 16" aria-hidden="true">
            <path d="M4 7h8l-1 8H5z" fill="#e8ecf0" stroke="#98a0a8" /><path d="M5 8L3 2M8 8V1M11 8l2-6" stroke="#d88020" strokeWidth="2" /><path d="M3 2l1 2M13 2l-1 2" stroke="#a03020" strokeWidth="2" />
          </svg>
          rm13d - Paint
        </TaskButton>
        <Tray>
          {TRAY.map((art, i) => <svg key={i} width="16" height="16" viewBox="0 0 16 16" aria-hidden="true">{art}</svg>)}
          <Clock>15.03</Clock>
        </Tray>
      </Taskbar>
    </Window>
  );
}
